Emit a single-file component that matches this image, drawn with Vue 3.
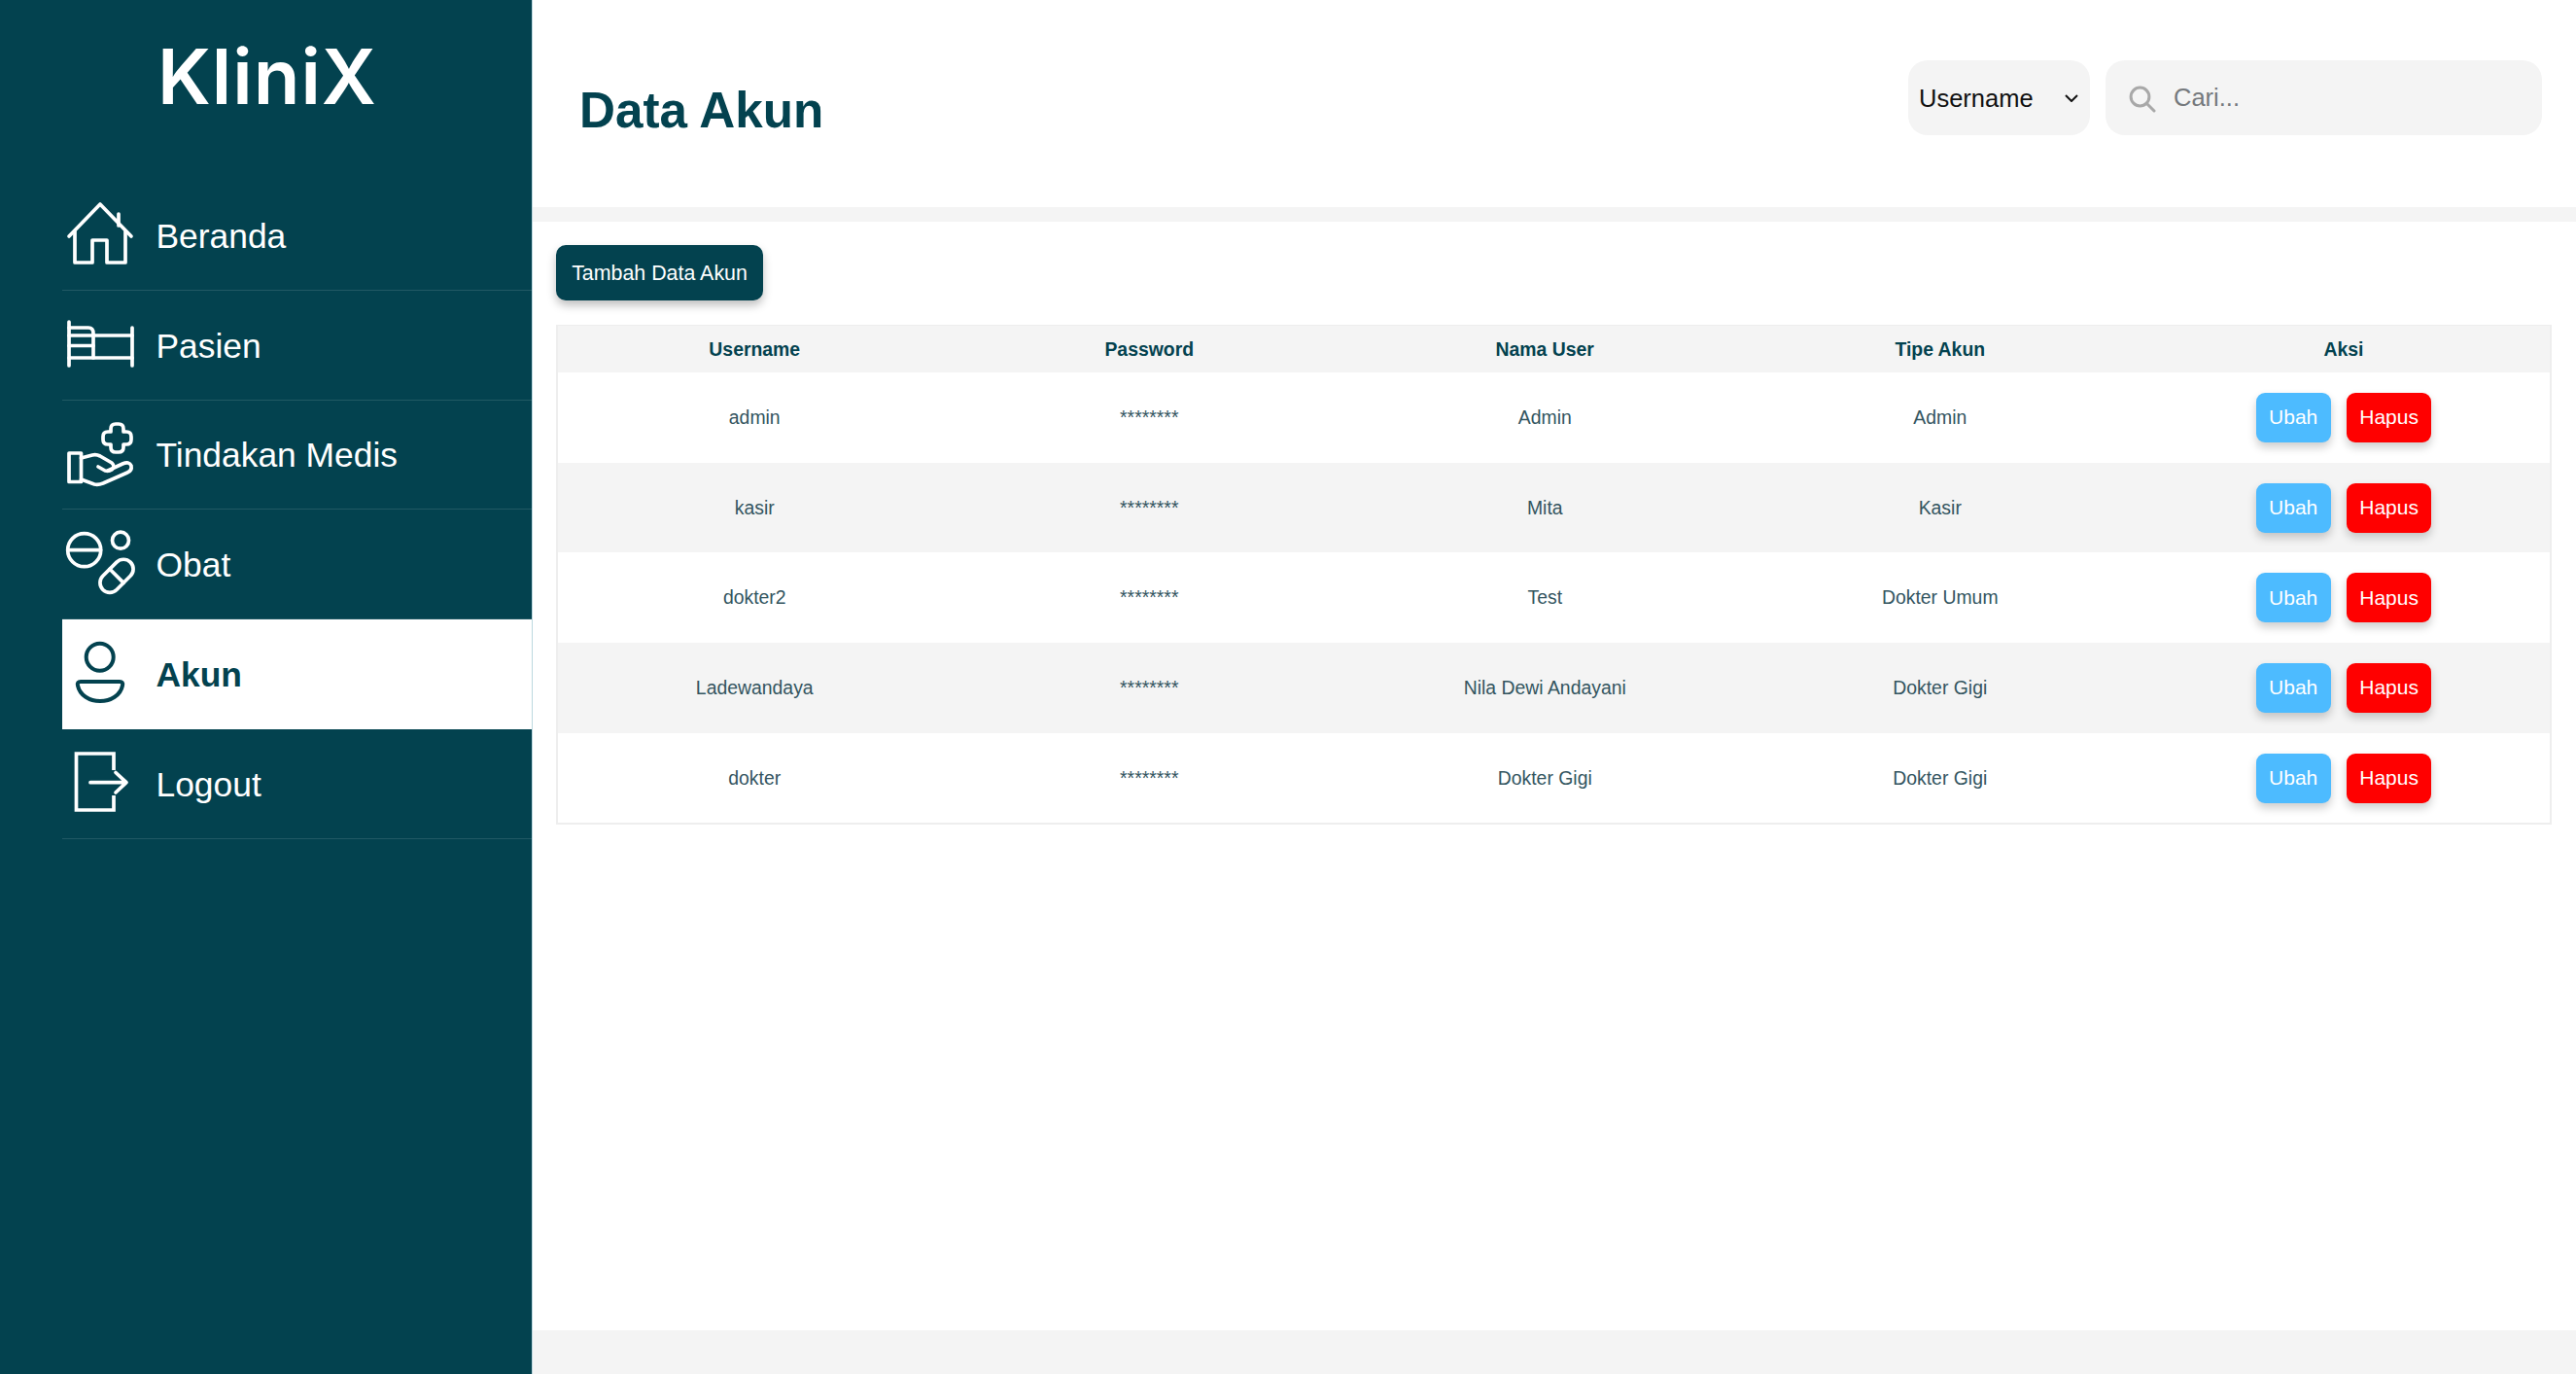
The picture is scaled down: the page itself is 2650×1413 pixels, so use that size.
<script setup>
const nav = [
  { key: 'home', label: 'Beranda' },
  { key: 'bed', label: 'Pasien' },
  { key: 'care', label: 'Tindakan Medis' },
  { key: 'pills', label: 'Obat' },
  { key: 'user', label: 'Akun', active: true },
  { key: 'logout', label: 'Logout' }
]
const rows = [
  { username: 'admin', name: 'Admin', type: 'Admin' },
  { username: 'kasir', name: 'Mita', type: 'Kasir' },
  { username: 'dokter2', name: 'Test', type: 'Dokter Umum' },
  { username: 'Ladewandaya', name: 'Nila Dewi Andayani', type: 'Dokter Gigi' },
  { username: 'dokter', name: 'Dokter Gigi', type: 'Dokter Gigi' }
]
</script>

<template>
  <div class="app">
    <aside class="sidebar">
      <div class="logo">KliniX</div>
      <nav class="nav">
        <a v-for="item in nav" :key="item.key" class="nav-item" :class="{ active: item.active }">
          <svg class="nav-icon" viewBox="0 0 80 80" fill="none" stroke="currentColor" stroke-width="3.7" stroke-linejoin="round" stroke-linecap="round">
            <g v-if="item.key === 'home'">
              <path d="M5 41 L37 8 L69 41" />
              <path d="M11 36 V68 H29 V45 H44 V68 H63 V36" />
              <path d="M56 18 V30" />
            </g>
            <g v-else-if="item.key === 'bed'">
              <path d="M5 16 V61 M70 22 V61" />
              <path d="M5 22 H25 Q30 22 30 28 V53" />
              <path d="M30 30 H70 M5 30 H30 M5 40.5 H30 M5 53 H70" />
            </g>
            <g v-else-if="item.key === 'care'">
              <path d="M48 14 Q48 9 53 9 H56 Q61 9 61 14 V17 H64 Q69 17 69 22 V25 Q69 30 64 30 H61 V33 Q61 38 56 38 H53 Q48 38 48 33 V30 H45 Q40 30 40 25 V22 Q40 17 45 17 H48 Z" />
              <rect x="5" y="39" width="12.5" height="29.5" />
              <path d="M17.5 44 L29 41 Q33 40 37 42 L49 49 Q53 53 49 56 Q46 58 42 57 L35 53" />
              <path d="M45 57 L60 50 Q67 47 69 52 Q70 57 65 59 L40 70 Q35 72 31 71 L17.5 66" />
            </g>
            <g v-else-if="item.key === 'pills'">
              <circle cx="20.7" cy="25.7" r="17" />
              <path d="M4 25.7 H37.5" />
              <circle cx="58" cy="15.7" r="8.5" />
              <g transform="rotate(-45 54 52.3)">
                <rect x="34" y="42.3" width="40" height="20" rx="10" />
                <path d="M54 42.3 V62.3" />
              </g>
            </g>
            <g v-else-if="item.key === 'user'">
              <circle cx="36.7" cy="22.8" r="14" stroke-width="4" />
              <path d="M17 48 H57 Q61 48 60 52 C58 62 48 68 37 68 C26 68 16 62 14 52 Q13 48 17 48 Z" stroke-width="4" />
            </g>
            <g v-else>
              <path d="M51 26 V9 H12.5 V67 H51 V52" stroke-linecap="butt" stroke-linejoin="miter" />
              <path d="M27 38.7 H63 M53 28.5 L64 38.7 L53 49" />
            </g>
          </svg>
          <span class="nav-label">{{ item.label }}</span>
        </a>
      </nav>
    </aside>

    <main class="main">
      <header class="topbar">
        <h1 class="title">Data Akun</h1>
        <div class="controls">
          <div class="select-wrap">
            <select class="select">
              <option>Username</option>
            </select>
            <svg class="chevron" viewBox="0 0 14 8" fill="none" stroke="#111" stroke-width="2">
              <path d="M1 1 L7 7 L13 1" />
            </svg>
          </div>
          <div class="search">
            <svg class="search-icon" viewBox="0 0 28 28" fill="none" stroke="#a8a8a8" stroke-width="3" stroke-linecap="round">
              <circle cx="11.5" cy="11.5" r="9.4" />
              <path d="M18.5 18.5 L26 26" />
            </svg>
            <input class="search-input" placeholder="Cari..." />
          </div>
        </div>
      </header>
      <section class="content">
        <button class="add-btn">Tambah Data Akun</button>
        <div class="table-box">
          <table class="table">
            <colgroup>
              <col class="col-a" /><col class="col-b" /><col class="col-c" /><col class="col-c" /><col />
            </colgroup>
            <thead>
              <tr>
                <th>Username</th>
                <th>Password</th>
                <th>Nama User</th>
                <th>Tipe Akun</th>
                <th>Aksi</th>
              </tr>
            </thead>
            <tbody>
              <tr v-for="r in rows" :key="r.username">
                <td>{{ r.username }}</td>
                <td>********</td>
                <td>{{ r.name }}</td>
                <td>{{ r.type }}</td>
                <td>
                  <div class="actions">
                    <button class="btn edit">Ubah</button>
                    <button class="btn del">Hapus</button>
                  </div>
                </td>
              </tr>
            </tbody>
          </table>
        </div>
      </section>
      <footer class="footer"></footer>
    </main>
  </div>
</template>

<style scoped>
.app {
  display: flex;
  height: 100vh;
  overflow: hidden;
  font-family: "Liberation Sans", Arial, sans-serif;
  background: #fff;
}
.sidebar {
  width: 547px;
  flex: none;
  background: #03424f;
  border-right: 1px solid #bcd8df;
  color: #fff;
}
.logo {
  height: 186px;
  box-sizing: border-box;
  padding-top: 34px;
  padding-left: 3px;
  text-align: center;
  font-family: Inter, sans-serif;
  font-weight: 600;
  font-size: 78px;
  line-height: 90px;
  letter-spacing: 1px;
}
.nav {
  margin-left: 64px;
}
.nav-item {
  display: flex;
  align-items: center;
  gap: 14.5px;
  height: 112.8px;
  box-sizing: border-box;
  padding-left: 2px;
  border-bottom: 1.5px solid rgba(255, 255, 255, 0.12);
  color: #fff;
  font-size: 35.4px;
}
.nav-label {
  padding-top: 3px;
}
.nav-item.active {
  background: #fff;
  color: #03424f;
  font-weight: 700;
  border-bottom-color: transparent;
}
.nav-icon {
  width: 80px;
  height: 80px;
  flex: none;
}
.main {
  flex: 1;
  min-width: 0;
  display: flex;
  flex-direction: column;
}
.topbar {
  height: 213px;
  flex: none;
  display: flex;
  justify-content: space-between;
  align-items: flex-start;
  padding: 0 35px 0 48px;
  border-bottom: 15px solid #f4f4f4;
}
.title {
  margin: 84px 0 0;
  font-size: 51.2px;
  line-height: 59px;
  font-weight: 700;
  color: #03424f;
}
.controls {
  display: flex;
  gap: 16px;
  margin-top: 62px;
}
.select-wrap {
  position: relative;
  width: 187px;
  height: 77px;
}
.select {
  appearance: none;
  width: 100%;
  height: 100%;
  border: 0;
  border-radius: 20px;
  background: #f4f4f4;
  padding: 0 0 0 11px;
  font-family: inherit;
  font-size: 25.5px;
  color: #111;
}
.chevron {
  position: absolute;
  right: 12px;
  top: 35px;
  width: 14px;
  height: 8px;
  pointer-events: none;
}
.search {
  width: 449px;
  height: 77px;
  display: flex;
  align-items: center;
  gap: 18px;
  box-sizing: border-box;
  padding-left: 24px;
  border-radius: 20px;
  background: #f4f4f4;
}
.search-icon {
  width: 28px;
  height: 28px;
  flex: none;
  margin-top: 3px;
}
.search-input {
  flex: 1;
  min-width: 0;
  border: 0;
  outline: 0;
  padding: 0;
  background: transparent;
  font-family: inherit;
  font-size: 25.5px;
  color: #333;
}
.search-input::placeholder {
  color: #75797d;
  opacity: 1;
}
.content {
  flex: 1;
  min-height: 0;
  padding: 24px 25px 0 24px;
}
.add-btn {
  display: block;
  width: 213px;
  height: 57px;
  padding: 2px 0 0;
  border: 0;
  border-radius: 10px;
  background: #03424f;
  color: #fff;
  font-family: inherit;
  font-size: 21.4px;
  box-shadow: 0 5px 10px rgba(0, 0, 0, 0.25);
}
.table-box {
  margin-top: 25px;
  border: 2px solid #eeeeee;
  border-top-width: 1px;
}
.table {
  width: 100%;
  border-collapse: collapse;
  table-layout: fixed;
  color: #33555f;
  font-size: 19.4px;
}
.col-a {
  width: 404.5px;
}
.col-b {
  width: 407.5px;
}
.col-c {
  width: 406.5px;
}
th {
  height: 48px;
  padding: 0;
  background: #f4f4f4;
  color: #03424f;
  font-size: 19.4px;
  font-weight: 700;
}
td {
  height: 92.7px;
  padding: 0;
  text-align: center;
}
tbody tr:nth-child(even) td {
  background: #f4f4f4;
}
.actions {
  display: flex;
  justify-content: center;
  gap: 16px;
}
.btn {
  height: 51px;
  padding: 0 13.5px;
  border: 0;
  border-radius: 9px;
  color: #fff;
  font-family: inherit;
  font-size: 21px;
  box-shadow: 0 5px 10px rgba(0, 0, 0, 0.2);
}
.edit {
  background: #4dbbff;
}
.del {
  background: #ff0000;
}
.footer {
  height: 45px;
  flex: none;
  background: #f4f4f4;
}
</style>
